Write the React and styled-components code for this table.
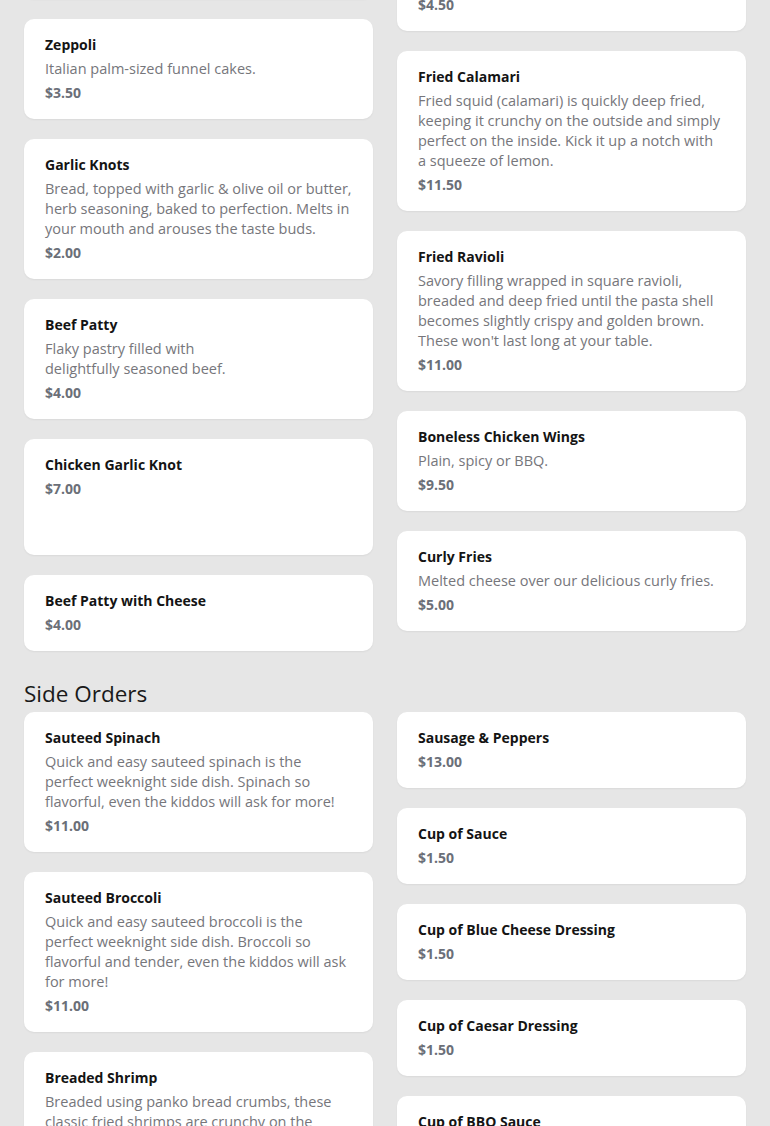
import React from "react";
import styled, { createGlobalStyle } from "styled-components";

const GlobalStyle = createGlobalStyle`
  html, body {
    margin: 0;
    padding: 0;
    background: #e6e6e6;
    font-family: "Open Sans", "Noto Sans", sans-serif;
    -webkit-font-smoothing: antialiased;
  }
  * { box-sizing: border-box; }
`;

const Page = styled.main`
  padding: 0 24px 24px;
  margin-top: -141px;
  overflow: hidden;
`;

const Section = styled.section`
  display: flex;
  flex-direction: column;
  & + & {
    margin-top: 28px;
  }
`;

const Heading = styled.h2`
  margin: 0 0 3px;
  font-size: 22.5px;
  line-height: 30px;
  font-weight: 400;
  color: #1a1a1a;
`;

const Columns = styled.div`
  display: grid;
  grid-template-columns: 1fr 1fr;
  column-gap: 24px;
  align-items: start;
`;

const Column = styled.div`
  display: flex;
  flex-direction: column;
  gap: 20px;
`;

const Card = styled.article`
  background: #ffffff;
  border-radius: 10px;
  box-shadow: 0 1px 2px rgba(0, 0, 0, 0.06);
  padding: 16px 21px;
  display: flex;
  flex-direction: column;
  gap: 4px;
  min-height: ${(p) => (p.$tall ? "116px" : "auto")};
`;

const Title = styled.h3`
  margin: 0;
  font-size: 14px;
  line-height: 20px;
  font-weight: 700;
  color: #141414;
`;

const Desc = styled.p`
  margin: 0;
  font-size: 14.5px;
  line-height: 20px;
  font-weight: 400;
  color: #76767b;
`;

const Price = styled.span`
  font-size: 14px;
  line-height: 20px;
  font-weight: 700;
  color: #6b6f78;
`;

function Item({ item }) {
  return (
    <Card $tall={item.tall}>
      <Title>{item.name}</Title>
      {item.desc && <Desc>{item.desc}</Desc>}
      <Price>{item.price}</Price>
    </Card>
  );
}

const appetizersLeft = [
  {
    name: "Mozzarella Sticks",
    desc: (
      <>
        Golden fried mozzarella sticks served hot
        <br />
        with our homemade marinara sauce
        <br />
        for dipping.
      </>
    ),
    price: "$8.50",
  },
  { name: "Zeppoli", desc: "Italian palm-sized funnel cakes.", price: "$3.50" },
  {
    name: "Garlic Knots",
    desc: "Bread, topped with garlic & olive oil or butter, herb seasoning, baked to perfection. Melts in your mouth and arouses the taste buds.",
    price: "$2.00",
  },
  {
    name: "Beef Patty",
    desc: (
      <>
        Flaky pastry filled with
        <br />
        delightfully seasoned beef.
      </>
    ),
    price: "$4.00",
  },
  { name: "Chicken Garlic Knot", price: "$7.00", tall: true },
  { name: "Beef Patty with Cheese", price: "$4.00" },
];

const appetizersRight = [
  { name: "Garlic Bread", price: "$4.00" },
  { name: "Garlic Bread with Cheese", price: "$4.50" },
  {
    name: "Fried Calamari",
    desc: (
      <>
        Fried squid (calamari) is quickly deep fried, keeping it crunchy on the outside and
        simply perfect on the inside. Kick it up a notch with
        <br />a squeeze of lemon.
      </>
    ),
    price: "$11.50",
  },
  {
    name: "Fried Ravioli",
    desc: "Savory filling wrapped in square ravioli, breaded and deep fried until the pasta shell becomes slightly crispy and golden brown. These won't last long at your table.",
    price: "$11.00",
  },
  { name: "Boneless Chicken Wings", desc: "Plain, spicy or BBQ.", price: "$9.50" },
  { name: "Curly Fries", desc: "Melted cheese over our delicious curly fries.", price: "$5.00" },
];

const sidesLeft = [
  {
    name: "Sauteed Spinach",
    desc: "Quick and easy sauteed spinach is the perfect weeknight side dish. Spinach so flavorful, even the kiddos will ask for more!",
    price: "$11.00",
  },
  {
    name: "Sauteed Broccoli",
    desc: "Quick and easy sauteed broccoli is the perfect weeknight side dish. Broccoli so flavorful and tender, even the kiddos will ask for more!",
    price: "$11.00",
  },
  {
    name: "Breaded Shrimp",
    desc: "Breaded using panko bread crumbs, these classic fried shrimps are crunchy on the outside and tender on the inside.",
    price: "$12.00",
  },
];

const sidesRight = [
  { name: "Sausage & Peppers", price: "$13.00" },
  { name: "Cup of Sauce", price: "$1.50" },
  { name: "Cup of Blue Cheese Dressing", price: "$1.50" },
  { name: "Cup of Caesar Dressing", price: "$1.50" },
  { name: "Cup of BBQ Sauce", price: "$1.50" },
  { name: "Cup of Ranch Dressing", price: "$1.50" },
];

function MenuSection({ title, left, right, hideTitle }) {
  return (
    <Section>
      {!hideTitle && <Heading>{title}</Heading>}
      <Columns>
        <Column>
          {left.map((it) => (
            <Item key={it.name} item={it} />
          ))}
        </Column>
        <Column>
          {right.map((it) => (
            <Item key={it.name} item={it} />
          ))}
        </Column>
      </Columns>
    </Section>
  );
}

export default function App() {
  return (
    <>
      <GlobalStyle />
      <Page>
        <MenuSection title="Appetizers" left={appetizersLeft} right={appetizersRight} hideTitle />
        <MenuSection title="Side Orders" left={sidesLeft} right={sidesRight} />
      </Page>
    </>
  );
}
